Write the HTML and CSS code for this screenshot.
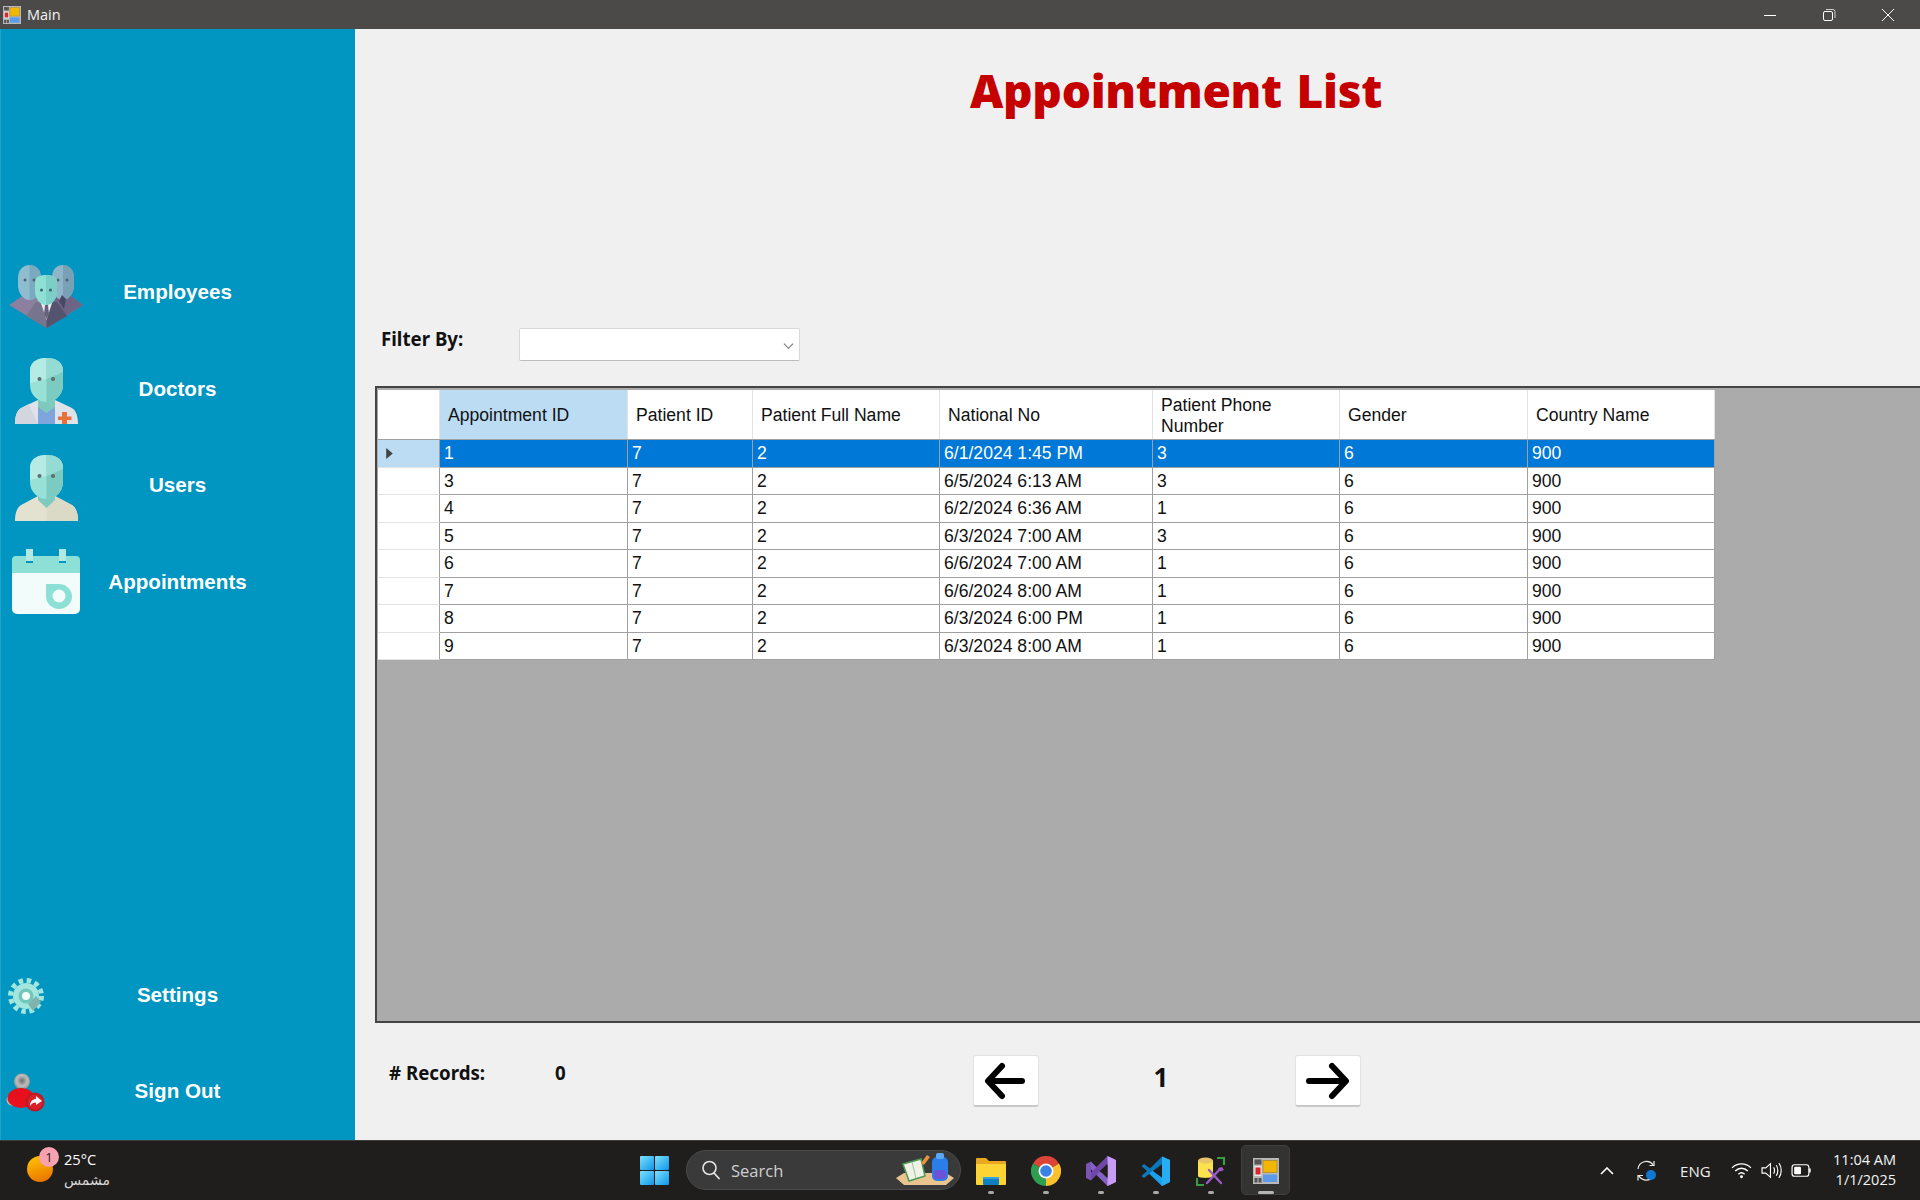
FILE: index.html
```html
<!DOCTYPE html>
<html lang="en">
<head>
<meta charset="utf-8">
<title>Main</title>
<link rel="stylesheet" href="styles.css">
</head>
<body>
<svg class="defs" width="0" height="0" aria-hidden="true">
  <symbol id="app" viewBox="0 0 26 26">
    <rect width="26" height="26" fill="#b9b9b9"/>
    <rect x="1.500" y="1.500" width="7" height="5" fill="#555"/>
    <rect x="1.500" y="8" width="7" height="10" fill="#e8e8e8"/>
    <rect x="2.500" y="9.500" width="5" height="7" fill="#d8262a"/>
    <rect x="1.500" y="20" width="3" height="4.500" fill="#555"/>
    <rect x="5.500" y="20" width="3" height="4.500" fill="#555"/>
    <rect x="10" y="2.500" width="14" height="12" fill="#f2b705" stroke="#a88a2c" stroke-width=".8"/>
    <rect x="10" y="16.500" width="14" height="7.500" fill="#5b9be8"/>
  </symbol>
</svg>

<div class="app">
  <header class="titlebar">
    <svg class="title-icon"><use href="#app"/></svg>
    <span class="title-text">Main</span>
    <div class="win-controls">
      <svg class="win-btn" viewBox="0 0 14 14"><path d="M1 7.500H13" stroke="#fff" fill="none"/></svg>
      <svg class="win-btn" viewBox="0 0 14 14"><rect x="1.500" y="3.500" width="9" height="9" rx="1.500" stroke="#fff" fill="none"/><path d="M4 1.500H11a2 2 0 0 1 2 2V10" stroke="#ccc" fill="none"/></svg>
      <svg class="win-btn" viewBox="0 0 14 14"><path d="M1 1L13 13M13 1L1 13" stroke="#fff" fill="none"/></svg>
    </div>
  </header>

  <div class="main">
    <aside class="sidebar">
      <nav class="nav-group">
        <a class="nav-item">
          <svg class="nav-icon ic-employees" viewBox="0 0 74 63">
            <path d="M0 40L18 28H58L74 40L38 63Z" fill="#8d7f9f"/>
            <path d="M38 28H58L74 40L38 63Z" fill="#6d6486"/>
            <path d="M9 13C9 5 14 0 20.500 0C27 0 32 5 32 13V20C32 28 27 35 20.500 35C14 35 9 28 9 20Z" fill="#8fbdd0"/>
            <path d="M20.500 0C27 0 32 5 32 13V20C32 28 27 35 20.500 35Z" fill="#7aa9c0"/>
            <path d="M43 13C43 5 47 0 54 0C60 0 65 5 65 13V20C65 28 60 35 54 35C47 35 43 28 43 20Z" fill="#8fb5c9"/>
            <path d="M54 0C60 0 65 5 65 13V20C65 28 60 35 54 35Z" fill="#78a1b6"/>
            <circle cx="16" cy="15" r="1.500" fill="#4e6170"/><circle cx="25" cy="15" r="1.500" fill="#4e6170"/>
            <circle cx="49" cy="15" r="1.500" fill="#4e6170"/><circle cx="58" cy="15" r="1.500" fill="#4e6170"/>
            <path d="M17 51L27 37H37.500V63Z" fill="#77758d"/>
            <path d="M37.500 37H48L58 51L37.500 63Z" fill="#55546f"/>
            <path d="M32 38H43L37.500 55Z" fill="#f1eef0"/>
            <path d="M36 40H39L40 49L37.500 54L35 49Z" fill="#6a6079"/>
            <path d="M53 30L57 34L55 44L50 36Z" fill="#4a4864"/>
            <path d="M26 18C26 12 30 10 37 10C44 10 48 12 48 18V26C48 34 43 40 37 40C31 40 26 34 26 26Z" fill="#8ee0d5"/>
            <path d="M37 10C44 10 48 12 48 18V26C48 34 43 40 37 40Z" fill="#7ccfc6"/>
            <circle cx="32.500" cy="25" r="1.500" fill="#46606a"/><circle cx="41.500" cy="25" r="1.500" fill="#46606a"/>
          </svg>
          <span class="nav-label">Employees</span>
        </a>
        <a class="nav-item">
          <svg class="nav-icon ic-person" viewBox="0 0 63 67">
            <path d="M0 67C0 57 3 52 8 50L23 43L31.500 48L40 43L55 50C60 52 63 57 63 67Z" fill="#dfe2e9"/>
            <path d="M0 67C0 57 3 52 8 50L14 47L23 67Z" fill="#d3d6df"/>
            <path d="M23 43H40V67H23Z" fill="#7fa5dd"/>
            <path d="M23 42H40V50L31.500 56L23 50Z" fill="#7ecabf"/>
            <path d="M15 14C15 5 22 1 31.500 1C41 1 48 5 48 14V28C48 38 40 45 31.500 45C23 45 15 38 15 28Z" fill="#97e1d7"/>
            <path d="M31.500 1C41 1 48 5 48 14V28C48 38 40 45 31.500 45Z" fill="#7ccbc1"/>
            <path d="M15 14C15 5 22 1 31.500 1V22L15 26Z" fill="#b6eae5"/>
            <path d="M31.500 1C41 1 48 5 48 14V15L31.500 22Z" fill="#94dcd3"/>
            <circle cx="24.500" cy="22" r="2" fill="#5c6c70"/><circle cx="38" cy="22" r="2" fill="#5c6c70"/>
            <path d="M47 55H52V59.500H56.500V63H52V67H47V63H43V59.500H47Z" fill="#e8703a"/>
          </svg>
          <span class="nav-label">Doctors</span>
        </a>
        <a class="nav-item">
          <svg class="nav-icon ic-user" viewBox="0 0 63 67">
            <path d="M0 67C0 57 3 52 8 50L23 42H40L55 50C60 52 63 57 63 67Z" fill="#e3e2d0"/>
            <path d="M31.500 50L40 42L55 50C60 52 63 57 63 67H31.500Z" fill="#dbdac7"/>
            <path d="M23 40H40V46L31.500 54L23 46Z" fill="#7ecabf"/>
            <path d="M15 14C15 5 22 1 31.500 1C41 1 48 5 48 14V28C48 38 40 45 31.500 45C23 45 15 38 15 28Z" fill="#97e1d7"/>
            <path d="M31.500 1C41 1 48 5 48 14V28C48 38 40 45 31.500 45Z" fill="#7ccbc1"/>
            <path d="M15 14C15 5 22 1 31.500 1V22L15 26Z" fill="#b6eae5"/>
            <path d="M31.500 1C41 1 48 5 48 14V15L31.500 22Z" fill="#94dcd3"/>
            <circle cx="24.500" cy="22" r="2" fill="#5c6c70"/><circle cx="38" cy="22" r="2" fill="#5c6c70"/>
          </svg>
          <span class="nav-label">Users</span>
        </a>
        <a class="nav-item">
          <svg class="nav-icon ic-calendar" viewBox="0 0 68 65">
            <rect x="14" y="0" width="7" height="12" fill="#b3e9e3"/>
            <rect x="47" y="0" width="7" height="12" fill="#b3e9e3"/>
            <path d="M0 24V11a4 4 0 0 1 4-4H14V14H21V7H47V14H54V7H64a4 4 0 0 1 4 4V24Z" fill="#8de0d6"/>
            <path d="M0 24H68V60a5 5 0 0 1-5 5H5a5 5 0 0 1-5-5Z" fill="#f2fdfb"/>
            <path d="M34 35H47A13 12.500 0 1 1 34 47.500Z" fill="#8de0d6"/>
            <circle cx="47" cy="47" r="6.500" fill="#f2fdfb"/>
          </svg>
          <span class="nav-label">Appointments</span>
        </a>
      </nav>
      <nav class="nav-group">
        <a class="nav-item">
          <svg class="nav-icon ic-gear" viewBox="0 0 36 36">
            <circle cx="18" cy="18" r="15.500" fill="none" stroke="#a3e6dd" stroke-width="5" stroke-dasharray="4.500 3.640"/>
            <circle cx="18" cy="18" r="13" fill="#a3e6dd"/>
            <path d="M20 26L28 18L33 24L25 33Z" fill="#7eb3ae"/>
            <circle cx="18" cy="18" r="7.500" fill="#72c7bb"/>
            <circle cx="18" cy="18" r="4" fill="#f4fdfb"/>
          </svg>
          <span class="nav-label">Settings</span>
        </a>
        <a class="nav-item">
          <svg class="nav-icon ic-signout" viewBox="0 0 39 39">
            <defs>
              <radialGradient id="headg" cx=".5" cy=".45" r=".6"><stop offset="0" stop-color="#6f6f6f"/><stop offset=".55" stop-color="#bdbdbd"/><stop offset="1" stop-color="#8a8a8a"/></radialGradient>
            </defs>
            <circle cx="16" cy="8.500" r="8" fill="url(#headg)"/>
            <circle cx="6" cy="27" r="5.500" fill="#b8bcbf"/>
            <ellipse cx="15" cy="25" rx="13.500" ry="10" fill="#e8101c"/>
            <circle cx="29" cy="29" r="9.500" fill="#b81c26"/>
            <circle cx="29" cy="29" r="7.500" fill="#dc2029"/>
            <path d="M24 33C24 28 27 26 30 26V23L36 28L30 32V29.500C27.500 29.500 25.500 30.500 24 33Z" fill="#fff"/>
          </svg>
          <span class="nav-label">Sign Out</span>
        </a>
      </nav>
    </aside>

    <section class="content">
      <div class="heading"><h1 class="page-title">Appointment List</h1></div>
      <div class="filter">
        <span class="filter-label">Filter By:</span>
        <div class="combo">
          <svg class="combo-arrow" viewBox="0 0 12 8"><path d="M1 1.500L6 6.500L11 1.500" fill="none" stroke="#777" stroke-width="1.200"/></svg>
        </div>
      </div>

      <div class="grid">
        <div class="row head">
          <div class="hc"></div>
          <div class="hc sel">Appointment ID</div>
          <div class="hc">Patient ID</div>
          <div class="hc">Patient Full Name</div>
          <div class="hc">National No</div>
          <div class="hc">Patient Phone Number</div>
          <div class="hc">Gender</div>
          <div class="hc">Country Name</div>
        </div>
        <div class="row active">
          <div class="rh"><svg class="pointer" viewBox="0 0 6 10"><path d="M0 0L6 5L0 10Z" fill="#444"/></svg></div>
          <div class="c">1</div><div class="c">7</div><div class="c">2</div><div class="c">6/1/2024 1:45 PM</div><div class="c">3</div><div class="c">6</div><div class="c">900</div>
        </div>
        <div class="row"><div class="rh"></div><div class="c">3</div><div class="c">7</div><div class="c">2</div><div class="c">6/5/2024 6:13 AM</div><div class="c">3</div><div class="c">6</div><div class="c">900</div></div>
        <div class="row"><div class="rh"></div><div class="c">4</div><div class="c">7</div><div class="c">2</div><div class="c">6/2/2024 6:36 AM</div><div class="c">1</div><div class="c">6</div><div class="c">900</div></div>
        <div class="row"><div class="rh"></div><div class="c">5</div><div class="c">7</div><div class="c">2</div><div class="c">6/3/2024 7:00 AM</div><div class="c">3</div><div class="c">6</div><div class="c">900</div></div>
        <div class="row"><div class="rh"></div><div class="c">6</div><div class="c">7</div><div class="c">2</div><div class="c">6/6/2024 7:00 AM</div><div class="c">1</div><div class="c">6</div><div class="c">900</div></div>
        <div class="row"><div class="rh"></div><div class="c">7</div><div class="c">7</div><div class="c">2</div><div class="c">6/6/2024 8:00 AM</div><div class="c">1</div><div class="c">6</div><div class="c">900</div></div>
        <div class="row"><div class="rh"></div><div class="c">8</div><div class="c">7</div><div class="c">2</div><div class="c">6/3/2024 6:00 PM</div><div class="c">1</div><div class="c">6</div><div class="c">900</div></div>
        <div class="row"><div class="rh"></div><div class="c">9</div><div class="c">7</div><div class="c">2</div><div class="c">6/3/2024 8:00 AM</div><div class="c">1</div><div class="c">6</div><div class="c">900</div></div>
      </div>

      <div class="footer">
        <span class="rec-label">#&nbsp;Records:</span>
        <span class="rec-value">0</span>
        <button class="page-btn">
          <svg class="page-arrow" viewBox="0 0 66 52"><path d="M49 26H16M29 11L15 26L29 41" fill="none" stroke="#000" stroke-width="6" stroke-linecap="round" stroke-linejoin="round"/></svg>
        </button>
        <span class="page-num">1</span>
        <button class="page-btn">
          <svg class="page-arrow" viewBox="0 0 66 52"><path d="M14 26H50M37 11L51 26L37 41" fill="none" stroke="#000" stroke-width="6" stroke-linecap="round" stroke-linejoin="round"/></svg>
        </button>
      </div>
    </section>
  </div>

  <footer class="taskbar">
    <div class="weather">
      <div class="sun-wrap">
        <span class="sun"></span>
        <span class="badge">1</span>
      </div>
      <div class="weather-text">
        <span class="temp">25°C</span>
        <span class="cond" lang="ar" dir="rtl">مشمس</span>
      </div>
    </div>

    <div class="start">
      <svg class="win-logo" viewBox="0 0 29 29">
        <defs><linearGradient id="wing" x1="0" y1="0" x2="1" y2="1"><stop offset="0" stop-color="#7fe0fc"/><stop offset="1" stop-color="#0c97ea"/></linearGradient></defs>
        <rect width="14" height="14" rx="1" fill="url(#wing)"/><rect x="15" width="14" height="14" rx="1" fill="url(#wing)"/>
        <rect y="15" width="14" height="14" rx="1" fill="url(#wing)"/><rect x="15" y="15" width="14" height="14" rx="1" fill="url(#wing)"/>
      </svg>
    </div>

    <div class="search">
      <svg class="search-icon" viewBox="0 0 20 20"><circle cx="8.500" cy="8" r="6.500" fill="none" stroke="#e4e4e4" stroke-width="1.600"/><path d="M13 13L18 18.500" stroke="#e4e4e4" stroke-width="1.800" stroke-linecap="round"/></svg>
      <span class="search-text">Search</span>
      <svg class="search-art" viewBox="0 0 58 34">
        <path d="M0 26L8 21H50L58 26L50 33H8Z" fill="#e9c48e"/>
        <path d="M7 12L25 7L29 24L13 29Z" fill="#eef3e6" stroke="#4c9a57" stroke-width="1.500"/>
        <path d="M16 10L20 26" stroke="#9cc29e"/>
        <path d="M25 11L31 3L34 5L28 13Z" fill="#e8923c"/>
        <rect x="36" y="5" width="16" height="24" rx="5" fill="#2b7de9"/>
        <rect x="40" y="1" width="8" height="6" rx="2" fill="#5aa8f5"/>
        <rect x="38" y="18" width="12" height="9" rx="2" fill="#6a53d8"/>
      </svg>
    </div>

    <div class="apps">
      <div class="tb-app">
        <svg class="tb-icon" viewBox="0 0 30 30">
          <path d="M0 3a1 1 0 0 1 1-1H10L13 5H29a1 1 0 0 1 1 1V10H0Z" fill="#e8a820"/>
          <path d="M0 8H30V28a1 1 0 0 1-1 1H1a1 1 0 0 1-1-1Z" fill="#fcd535"/>
          <rect x="7" y="21" width="16" height="8" rx="1" fill="#0f7fc4"/>
          <rect x="7" y="21" width="16" height="2" fill="#2ea7e5"/>
        </svg>
        <span class="dot"></span>
      </div>
      <div class="tb-app">
        <svg class="tb-icon" viewBox="0 0 30 30">
          <path d="M15 15L2 7.500A15 15 0 0 1 28 7.500Z" fill="#db4437"/>
          <path d="M15 15L28 7.500A15 15 0 0 1 15 30Z" fill="#fbc02d"/>
          <path d="M15 15L15 30A15 15 0 0 1 2 7.500Z" fill="#2e9e4f"/>
          <circle cx="15" cy="15" r="7.500" fill="#fff"/>
          <circle cx="15" cy="15" r="5.800" fill="#3b82e6"/>
        </svg>
        <span class="dot"></span>
      </div>
      <div class="tb-app">
        <svg class="tb-icon" viewBox="0 0 30 30">
          <path d="M0 8L5 5.500V24.500L0 22Z" fill="#7a55b5"/>
          <path d="M5 5.500L22 23L29 26.500L21.500 30L5 13.500Z" fill="#8661c5"/>
          <path d="M5 24.500L22 7L29 3.500L21.500 0L5 16.500Z" fill="#7046a8"/>
          <path d="M21.500 0L30 4V26L21.500 30Z" fill="#c69cf5"/>
          <path d="M21.500 9L13.500 15L21.500 21Z" fill="#1f1e1d"/>
        </svg>
        <span class="dot"></span>
      </div>
      <div class="tb-app">
        <svg class="tb-icon" viewBox="0 0 30 30">
          <path d="M0.500 10L3 8L9 12.500L21 0.500V7.500L3 22L0.500 20L6 15Z" fill="#0b78bd"/>
          <path d="M3 22L21 7.500V13L9 17.500Z" fill="#0b78bd"/>
          <path d="M21 0.500L29 4V26L21 30L8 17.500L12 14.500L21 21.500V8.500Z" fill="#1aa0ec"/>
          <path d="M21 0.500L29 4V26L21 30Z" fill="#26adf2"/>
          <path d="M21 8.500L12 15L21 21.500Z" fill="#1f1e1d"/>
        </svg>
        <span class="dot"></span>
      </div>
      <div class="tb-app">
        <svg class="tb-icon" viewBox="0 0 30 30">
          <path d="M2 5C2 2.500 17 2.500 17 5V20C17 22.500 2 22.500 2 20Z" fill="#fbe24e"/>
          <ellipse cx="9.500" cy="4.500" rx="7.500" ry="3" fill="#e9c46a"/>
          <path d="M21 2H28V9M1 22V29H8" fill="none" stroke="#3b9c46" stroke-width="2.200"/>
          <path d="M11 27L24 13M13 14L25 27" stroke="#9b59c9" stroke-width="2.400" stroke-linecap="round"/>
          <path d="M22 12L26 11L28 14L24.500 15.500Z" fill="#9b59c9"/>
        </svg>
        <span class="dot"></span>
      </div>
      <div class="tb-app is-active">
        <svg class="tb-icon"><use href="#app"/></svg>
        <span class="dot"></span>
      </div>
    </div>

    <div class="tray">
      <svg class="tray-chevron" viewBox="0 0 14 8"><path d="M1 7L7 1L13 7" fill="none" stroke="#fff" stroke-width="1.600"/></svg>
      <svg class="tray-sync" viewBox="0 0 22 22">
        <path d="M2 9A8.500 8.500 0 0 1 17 4.500M18 1V5.500H13.500" fill="none" stroke="#eee" stroke-width="1.200"/>
        <path d="M16 18A8.500 8.500 0 0 1 3 16M2 20.500V15.500H7" fill="none" stroke="#eee" stroke-width="1.200"/>
        <circle cx="15" cy="15" r="5" fill="#0f78d4"/>
      </svg>
      <span class="tray-lang">ENG</span>
      <svg class="tray-ico" viewBox="0 0 20 16">
        <path d="M1 5.500C6 .5 14 .5 19 5.500M4 8.500C7.500 5 12.500 5 16 8.500M7 11.500C8.700 10 11.300 10 13 11.500" fill="none" stroke="#fff" stroke-width="1.300"/>
        <circle cx="10" cy="14" r="1.400" fill="#fff"/>
      </svg>
      <svg class="tray-ico" viewBox="0 0 20 16">
        <path d="M1 5.500H4.500L9 1.500V14.500L4.500 10.500H1Z" fill="none" stroke="#fff" stroke-width="1.100"/>
        <path d="M12 5C13.200 6.500 13.200 9.500 12 11M14.500 3C16.500 5.500 16.500 10.500 14.500 13M17 1C20 4.500 20 11.500 17 15" fill="none" stroke="#fff" stroke-width="1.100"/>
      </svg>
      <svg class="tray-ico" viewBox="0 0 20 16">
        <rect x="1" y="2.500" width="16" height="11" rx="2.500" fill="none" stroke="#fff" stroke-width="1.100"/>
        <rect x="3" y="4.500" width="6.500" height="7" rx="1" fill="#fff"/>
        <path d="M18 6V10" stroke="#fff" stroke-width="1.500"/>
      </svg>
      <div class="clock"><span>11:04 AM</span><span>1/1/2025</span></div>
    </div>
  </footer>
</div>
</body>
</html>
```
FILE: styles.css
```css
* { box-sizing: border-box; }
html, body { margin: 0; height: 100%; }
body { overflow: hidden; font-family: "Liberation Sans", Arial, sans-serif; }
.defs { display: block; height: 0; }

.app { width: 1920px; height: 1200px; display: flex; flex-direction: column; background: #f0f0f0; }

/* Title bar */
.titlebar { height: 29px; flex: none; display: flex; align-items: center; background: #4b4a48; color: #f2f2f2; padding-left: 3px; }
.title-icon { width: 18px; height: 18px; }
.title-text { margin-left: 6px; font: 14.5px "Open Sans", sans-serif; }
.win-controls { margin-left: auto; display: flex; padding-right: 25px; gap: 45px; }
.win-btn { width: 14px; height: 14px; display: block; }

.main { flex: 1; min-height: 0; display: flex; }

/* Sidebar */
.sidebar { width: 355px; flex: none; background: #0096c1; border-left: 1px solid #1ea3c9; padding: 215px 0 .75px; display: flex; flex-direction: column; justify-content: space-between; }
.nav-item { height: 96.5px; display: grid; grid-template-columns: 1fr auto 1fr; align-items: center; margin-left: -1px; }
.nav-label { grid-column: 2; grid-row: 1; color: #fff; font-size: 20.6px; font-weight: 700; }
.nav-icon { grid-column: 1; grid-row: 1; justify-self: start; display: block; }
.ic-employees { width: 74px; height: 63px; margin: 8px 0 0 9px; }
.ic-person { width: 63px; height: 67px; margin: 4px 0 0 15px; }
.ic-user { width: 63px; height: 67px; margin: 5px 0 0 15px; }
.ic-calendar { width: 68px; height: 65px; margin: -1px 0 0 12px; }
.ic-gear { width: 36px; height: 36px; margin: 2px 0 0 8px; }
.ic-signout { width: 39px; height: 39px; margin: 3px 0 0 6px; }

/* Content */
.content { flex: 1; min-width: 0; display: flex; flex-direction: column; }
.heading { height: 299px; flex: none; padding: 32px 0 0 615px; }
.page-title { margin: 0; font: 900 46px/58px "Noto Sans", sans-serif; letter-spacing: -.3px; word-spacing: 3px; color: #c40000; white-space: nowrap; }

.filter { height: 33px; flex: none; display: flex; padding-left: 26px; }
.filter-label { width: 138px; font: 700 18.7px/22px "Noto Sans", sans-serif; color: #111; }
.combo { width: 281px; height: 33px; background: #fff; border: 1px solid #d9d9d9; border-bottom-color: #bdbdbd; border-radius: 2px; display: flex; align-items: center; justify-content: flex-end; padding-right: 5px; }
.combo-arrow { width: 11px; height: 8px; margin-top: 2px; }

/* Data grid */
.grid { flex: none; height: 637px; margin: 25px 0 0 20px; background: #ababab; border: 2px solid #444; border-right: 0; padding: 2px 0 0 1px; overflow: hidden; font-size: 17.6px; color: #111; }
.row { display: grid; grid-template-columns: 62px 188px 125px 187px 213px 187px 188px 187px; width: 1337px; height: 27.5px; background: #fff; }
.row.head { height: 50px; border-bottom: 1px solid #a0a0a0; }
.hc { background: #fff; border-right: 1px solid #e3e3e3; padding: 2px 8px 0; display: flex; align-items: center; line-height: 21px; }
.hc.sel { background: #bcdcf4; }
.rh { border-right: 1px solid #a0a0a0; border-bottom: 1px solid #e3e3e3; display: flex; align-items: center; padding-left: 8px; }
.c { border-right: 1px solid #a0a0a0; border-bottom: 1px solid #a0a0a0; padding: 0 4px; line-height: 27px; white-space: nowrap; overflow: hidden; }
.row.active .c { background: #0078d7; color: #fff; }
.row.active .rh { background: #bcdcf4; }
.pointer { width: 7px; height: 11px; }

/* Footer of the list */
.footer { flex: 1; display: flex; align-items: flex-start; padding: 32px 0 0 34px; }
.rec-label { width: 166px; margin-top: 6px; font: 700 18.7px/24px "Noto Sans", sans-serif; color: #111; white-space: nowrap; }
.rec-value { width: 418px; margin-top: 6px; font: 700 18.7px/24px "Noto Sans", sans-serif; color: #111; }
.page-btn { width: 66px; height: 52px; padding: 0; background: #fff; border: 1px solid #e2e2e2; border-bottom: 2px solid #c9c9c9; border-radius: 3px; }
.page-arrow { width: 66px; height: 52px; display: block; margin: -1px; }
.page-num { width: 256px; padding-right: 12px; margin-top: 7px; text-align: center; font: 700 26px/30px "Noto Sans", sans-serif; color: #111; }

/* Taskbar */
.taskbar { height: 60px; flex: none; display: flex; background: #1f1e1d; border-top: 1px solid #3d3d3c; color: #fff; font-family: "Open Sans", sans-serif; }
.weather { width: 640px; flex: none; display: flex; padding-left: 27px; }
.sun-wrap { width: 37px; position: relative; }
.sun { display: block; width: 26px; height: 26px; margin-top: 15px; border-radius: 50%; background: linear-gradient(160deg, #ffc800, #e86a00); }
.badge { position: absolute; left: 12px; top: 6px; width: 20px; height: 20px; border-radius: 50%; background: #f7a2ae; color: #2a1a1c; font-size: 13px; line-height: 20px; text-align: center; }
.weather-text { display: flex; flex-direction: column; padding-top: 8px; }
.temp { font-size: 14.6px; line-height: 20px; }
.cond { font: 14px/22px "DejaVu Sans", sans-serif; color: #d8d8d8; text-align: left; }

.start { width: 46px; flex: none; padding-top: 15px; }
.win-logo { width: 29px; height: 29px; display: block; }

.search { width: 275px; height: 40px; margin-top: 9px; flex: none; display: flex; align-items: center; background: #3a3a3a; border: 1px solid #4a4a4a; border-radius: 20px; padding-left: 14px; }
.search-icon { width: 20px; height: 20px; }
.search-text { margin-left: 10px; font-size: 16.500px; color: #cfcfcf; }
.search-art { width: 58px; height: 34px; margin-left: auto; margin-right: 6px; margin-top: -2px; }

.apps { flex: none; display: flex; margin-left: 2px; }
.tb-app { width: 55px; height: 59px; padding-top: 15px; display: flex; flex-direction: column; align-items: center; position: relative; }
.tb-icon { width: 30px; height: 30px; display: block; position: relative; }
.dot { width: 6px; height: 3px; margin-top: 5px; border-radius: 2px; background: #a8a8a8; position: relative; }
.is-active::before { content: ""; position: absolute; left: 3px; right: 3px; top: 4px; bottom: 5px; background: #333332; border: 1px solid #3e3e3d; border-radius: 5px; }
.is-active .tb-icon { width: 26px; height: 26px; margin: 2px 0; }
.is-active .dot { width: 16px; background: #b5b5b5; }

.tray { margin-left: auto; flex: none; display: flex; align-items: center; padding-right: 24px; }
.tray-chevron { width: 14px; height: 8px; }
.tray-sync { width: 22px; height: 22px; margin-left: 22px; }
.tray-lang { margin-left: 22px; width: 29px; font-size: 15px; color: #eee; }
.tray-ico { width: 21px; height: 17px; margin-left: 9px; }
.tray-lang + .tray-ico { margin-left: 22px; }
.clock { margin-left: 21px; margin-top: -1px; display: flex; flex-direction: column; align-items: flex-end; font-size: 14.500px; line-height: 20.500px; color: #f2f2f2; }
```
